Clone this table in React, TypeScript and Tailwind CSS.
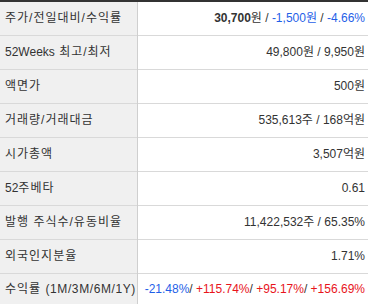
import React from "react";

type Row = { label: React.ReactNode; value: React.ReactNode };

const blue = "text-[#1f5fe8]";
const red = "text-[#e8141c]";

const rows: Row[] = [
  {
    label: "주가/전일대비/수익률",
    value: (
      <>
        <b className="font-bold">30,700</b>원 / <span className={blue}>-1,500원</span> /{" "}
        <span className={blue}>-4.66%</span>
      </>
    ),
  },
  {
    label: (
      <>
        <span className="tracking-normal">52Weeks</span> 최고/최저
      </>
    ),
    value: "49,800원 / 9,950원",
  },
  { label: "액면가", value: "500원" },
  { label: "거래량/거래대금", value: "535,613주 / 168억원" },
  { label: "시가총액", value: "3,507억원" },
  {
    label: (
      <>
        <span className="tracking-normal">52</span>주베타
      </>
    ),
    value: "0.61",
  },
  { label: "발행 주식수/유동비율", value: "11,422,532주 / 65.35%" },
  { label: "외국인지분율", value: "1.71%" },
];

const labelCls =
  "w-[137px] bg-[#f0f0f0] border-r border-[#cfcfcf] pl-[5px] text-left font-normal whitespace-nowrap tracking-[1px]";

export default function App() {
  return (
    <div
      className="w-[368px] h-[304px] bg-white overflow-hidden text-[12px] text-[#333]"
      style={{ fontFamily: '"Liberation Sans", "Noto Sans CJK KR", sans-serif' }}
    >
      <table className="w-full border-collapse border-t-2 border-[#333]">
        <tbody>
          {rows.map((row, i) => (
            <tr key={i} className="h-[34px] border-b border-[#d9d9d9]">
              <th className={labelCls}>{row.label}</th>
              <td className="pr-[3px] text-right">{row.value}</td>
            </tr>
          ))}
          <tr className="h-[32px]">
            <th className={labelCls}>
              수익률 <span className="tracking-[0.6px]">(1M/3M/6M/1Y)</span>
            </th>
            <td className="pr-[3px] text-right whitespace-nowrap">
              <span className={blue}>-21.48%</span>/ <span className={red}>+115.74%</span>/{" "}
              <span className={red}>+95.17%</span>/ <span className={red}>+156.69%</span>
            </td>
          </tr>
        </tbody>
      </table>
    </div>
  );
}
